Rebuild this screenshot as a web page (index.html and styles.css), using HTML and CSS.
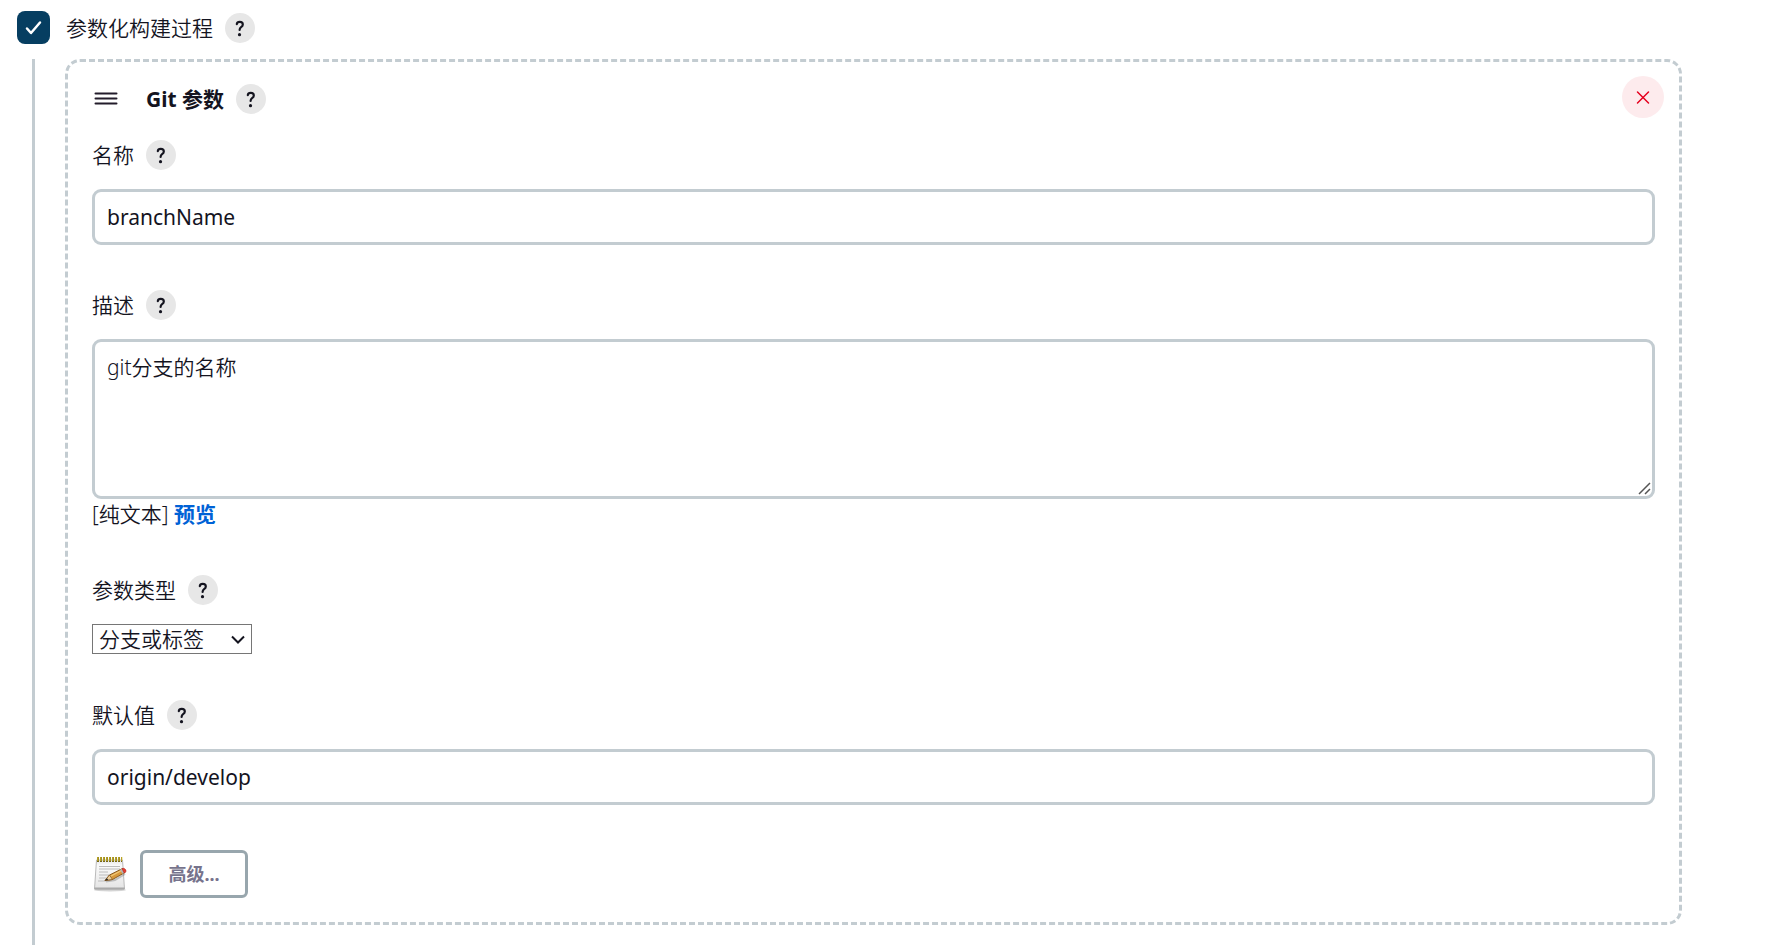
FILE: index.html
```html
<!DOCTYPE html>
<html lang="zh-CN">
<head>
<meta charset="utf-8">
<title>参数化构建过程</title>
<link rel="stylesheet" href="styles.css">
</head>
<body>
<!-- shared icons -->
<svg class="defs" width="0" height="0">
  <symbol id="icon-help" viewBox="0 0 30 30">
    <path d="M11.800 11.200c.2-1.500 1.300-2.300 2.900-2.300 1.800 0 3.100 1 3.100 2.500 0 1.300-.7 2-1.700 2.700-1 .7-1.500 1.300-1.500 2.900" fill="none" stroke="currentColor" stroke-width="2.200" stroke-linecap="round" stroke-linejoin="round"/>
    <circle cx="14.500" cy="21.700" r="1.600" fill="currentColor"/>
  </symbol>
</svg>

<form class="page" action="#">
  <div class="option">
    <span class="check">
      <input type="checkbox" id="parameterized" checked>
      <svg class="check-mark" viewBox="0 0 33 33"><path d="M10 17.500l4 4.500 9-10.500" fill="none" stroke="#fff" stroke-width="2.500" stroke-linecap="round" stroke-linejoin="round"/></svg>
    </span>
    <label for="parameterized">参数化构建过程</label>
    <a href="#" class="help" aria-label="帮助"><svg><use href="#icon-help"/></svg></a>
  </div>

  <div class="nested">
    <section class="chunk">
      <div class="chunk-header">
        <svg class="grip" viewBox="0 0 24 14"><path d="M1.500 1.500h21M1.500 6.500h21M1.500 11.500h21" fill="none" stroke="#231c2b" stroke-width="2" stroke-linecap="round"/></svg>
        <b>Git 参数</b>
        <a href="#" class="help" aria-label="帮助"><svg><use href="#icon-help"/></svg></a>
        <button type="button" class="delete" aria-label="删除">
          <svg viewBox="0 0 42 42"><path d="M15.500 16l11 11M26.500 16l-11 11" fill="none" stroke="#e6001f" stroke-width="1.500" stroke-linecap="round"/></svg>
        </button>
      </div>

      <div class="fields">
        <div class="field">
          <div class="field-label">
            <label for="name">名称</label>
            <a href="#" class="help" aria-label="帮助"><svg><use href="#icon-help"/></svg></a>
          </div>
          <input type="text" class="text-input" id="name" value="branchName">
        </div>

        <div class="field">
          <div class="field-label">
            <label for="description">描述</label>
            <a href="#" class="help" aria-label="帮助"><svg><use href="#icon-help"/></svg></a>
          </div>
          <div class="textarea">
            <textarea class="text-input" id="description" spellcheck="false">git分支的名称</textarea>
            <svg class="resizer" viewBox="0 0 13 13"><path d="M1 12L12 1M7 12l5-5" fill="none" stroke="#555" stroke-width="1.500"/></svg>
          </div>
          <div class="preview">[纯文本] <a href="#">预览</a></div>
        </div>

        <div class="field">
          <div class="field-label">
            <label for="type">参数类型</label>
            <a href="#" class="help" aria-label="帮助"><svg><use href="#icon-help"/></svg></a>
          </div>
          <div class="select">
            <select id="type">
              <option>分支或标签</option>
            </select>
            <svg class="arrow" viewBox="0 0 14 9"><path d="M1 1.500l6 6 6-6" fill="none" stroke="#14141f" stroke-width="2"/></svg>
          </div>
        </div>

        <div class="field">
          <div class="field-label">
            <label for="default">默认值</label>
            <a href="#" class="help" aria-label="帮助"><svg><use href="#icon-help"/></svg></a>
          </div>
          <input type="text" class="text-input" id="default" value="origin/develop">
        </div>

        <div class="advanced">
          <svg class="notepad" viewBox="0 0 36 36">
            <defs>
              <linearGradient id="paper" x1="0" y1="0" x2="0" y2="1">
                <stop offset="0" stop-color="#e6e6e6"/>
                <stop offset=".2" stop-color="#fafafa"/>
                <stop offset="1" stop-color="#e4e4e4"/>
              </linearGradient>
            </defs>
            <ellipse cx="18" cy="34" rx="16" ry="1.500" fill="#aaa" opacity=".5"/>
            <path d="M4.500 4h26l2 29h-30z" fill="url(#paper)" stroke="#aaa" stroke-width=".8"/>
            <path d="M2.600 31.500h29.800v2H2.600z" fill="#a9a9a9"/>
            <path d="M7 10.500h21M7 13h21M7 16h9M7 19h16M7 22h12M6 25h8" stroke="#bcbcbc" stroke-width="1"/>
            <path d="M5 3.500h25" stroke="#746619" stroke-width="5" stroke-dasharray="2 1"/>
            <path d="M5.300 3h25" stroke="#d1b92c" stroke-width="4" stroke-dasharray="1.200 1.800"/>
            <path d="M14 25.500l9-1.500 10-6" fill="none" stroke="#777" stroke-width="2" opacity=".4"/>
            <path d="M13 24.500l4.500-5.500 13-6.500 2.500 4-12.500 7z" fill="#d7983c" stroke="#805017" stroke-width=".9"/>
            <path d="M18 20.500l12.500-6.500" stroke="#f2c877" stroke-width="1.300"/>
            <path d="M13 24.500l4.500-5.500 3 4.500z" fill="#edcf9d" stroke="#805017" stroke-width=".7"/>
            <path d="M13 24.500l2-2.300 1.200 1.900z" fill="#222"/>
            <path d="M28 13.700l2-1 2.500 4-2 1.100z" fill="#b5b5b5"/>
            <path d="M30 12.700c2.500-1.500 5.500 2 3.300 3.700l-1.200.6z" fill="#e43c32" stroke="#ac211c" stroke-width=".5"/>
          </svg>
          <button type="button" class="advanced-button">高级...</button>
        </div>
      </div>
    </section>
  </div>
</form>
</body>
</html>
```

FILE: styles.css
```css
* {
  box-sizing: border-box;
}

body {
  margin: 0;
  background: #fff;
  color: #14141f;
  font-family: "Noto Sans", "Noto Sans CJK SC", sans-serif;
  font-size: 21px;
  line-height: 30px;
}

input, textarea, select, button {
  font: inherit;
  color: inherit;
  margin: 0;
}

svg {
  display: block;
}

.defs {
  position: absolute;
}

.page {
  display: flex;
  flex-direction: column;
  min-height: 100vh;
}

.option {
  display: flex;
  align-items: center;
  padding: 11px 17px 15px;
}

.option label {
  margin-left: 16px;
  font-weight: 350;
}

.check {
  position: relative;
  width: 33px;
  height: 33px;
}

.check input {
  display: block;
  appearance: none;
  width: 33px;
  height: 33px;
  border-radius: 8px;
  background: #063e61;
}

.check-mark {
  position: absolute;
  top: 0;
  left: 0;
  width: 33px;
  height: 33px;
  pointer-events: none;
}

.help {
  width: 30px;
  height: 30px;
  margin-left: 12px;
  border-radius: 50%;
  background: #e7e7e7;
  color: #14141f;
}

.help svg {
  width: 30px;
  height: 30px;
}

.nested {
  flex: 1;
  margin-left: 32px;
  padding: 0 100px 20px 30px;
  border-left: 3px solid #c3ccd1;
}

.chunk {
  padding: 14px 15px 24px;
  border: 3px dashed #c3ccd1;
  border-radius: 15px;
}

.chunk-header {
  display: flex;
  align-items: center;
  height: 46px;
  padding-left: 11px;
}

.grip {
  width: 24px;
  height: 14px;
  margin-right: 28px;
}

.delete {
  align-self: flex-start;
  width: 42px;
  height: 42px;
  margin-left: auto;
  padding: 0;
  border: none;
  border-radius: 50%;
  background: #fdebed;
  cursor: pointer;
}

.fields {
  display: flex;
  flex-direction: column;
  gap: 45px;
  padding: 18px 9px 0;
}

.field-label {
  display: flex;
  align-items: center;
  margin-bottom: 19px;
  font-weight: 350;
}

.text-input {
  display: block;
  width: 100%;
  height: 56px;
  padding: 10px 12px;
  border: 3px solid #c3ccd1;
  border-radius: 9px;
  background: #fff;
}

.textarea {
  position: relative;
}

.textarea .text-input {
  height: 160px;
  resize: vertical;
  font-weight: 350;
}

.textarea .text-input::-webkit-resizer {
  background: transparent;
}

.resizer {
  position: absolute;
  right: 4px;
  bottom: 4px;
  width: 13px;
  height: 13px;
  pointer-events: none;
}

.preview {
  font-weight: 350;
  line-height: 31px;
}

.preview a {
  color: #0062d6;
  font-weight: bold;
  text-decoration: none;
}

.select {
  position: relative;
  width: 160px;
  padding-bottom: 1px;
}

.select select {
  display: block;
  appearance: none;
  width: 100%;
  height: 30px;
  padding: 0 6px;
  border: 1px solid #767676;
  border-radius: 0;
  background: #fff;
  font-weight: 350;
  line-height: 28px;
}

.arrow {
  position: absolute;
  top: 11px;
  right: 7px;
  width: 14px;
  height: 9px;
  pointer-events: none;
}

.advanced {
  display: flex;
  align-items: center;
  gap: 12px;
}

.notepad {
  width: 36px;
  height: 36px;
}

.advanced-button {
  width: 108px;
  height: 48px;
  padding: 0;
  border: 3px solid #98a6ad;
  border-radius: 6px;
  background: #fff;
  color: #76738c;
  font-size: 18px;
  font-weight: bold;
  cursor: pointer;
}
```
